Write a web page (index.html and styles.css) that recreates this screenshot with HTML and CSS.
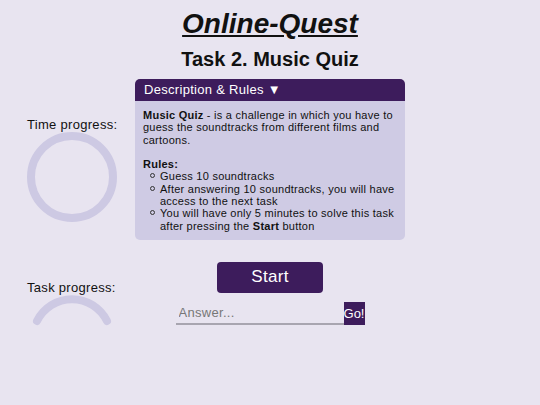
FILE: index.html
```html
<!DOCTYPE html>
<html lang="en">
<head>
    <meta charset="UTF-8">
    <meta name="viewport" content="width=device-width, initial-scale=1.0">
    <title>Online-Quest</title>
    <link rel="stylesheet" href="styles.css">
</head>
<body>
    <h1 class="title">Online-Quest</h1>
    <h2 class="subtitle">Task 2. Music Quiz</h2>

    <div class="layout">
        <div class="progress">
            <div class="progress-label">Time progress:</div>
            <svg class="ring" width="90" height="90" viewBox="0 0 90 90">
                <circle cx="45" cy="45" r="41" fill="none" stroke="#cdc9e3" stroke-width="8"/>
            </svg>
            <div class="progress-label task-label">Task progress:</div>
            <svg class="arc" width="90" height="40" viewBox="0 0 90 40">
                <path d="M10 30 A39 39 0 0 1 80 30" fill="none" stroke="#cdc9e3" stroke-width="8" stroke-linecap="round"/>
            </svg>
        </div>

        <div class="main">
            <div class="rules">
                <div class="rules-header">Description &amp; Rules ▼</div>
                <div class="rules-body">
                    <p><b>Music Quiz</b> - is a challenge in which you have to guess the soundtracks from different films and cartoons.</p>
                    <p class="rules-title"><b>Rules:</b></p>
                    <ul>
                        <li>Guess 10 soundtracks</li>
                        <li>After answering 10 soundtracks, you will have access to the next task</li>
                        <li>You will have only 5 minutes to solve this task after pressing the <b>Start</b> button</li>
                    </ul>
                </div>
            </div>

            <button class="start">Start</button>

            <div class="answer">
                <input class="answer-input" type="text" placeholder="Answer...">
                <button class="go">Go!</button>
            </div>
        </div>
    </div>
</body>
</html>
```

FILE: styles.css
```css
body {
    margin: 0;
    background-color: #e8e4f0;
    font-family: "Liberation Sans", Arial, sans-serif;
    color: #111;
}

.title {
    margin: 8px 0 0;
    font-size: 28px;
    line-height: 32px;
    font-style: italic;
    font-weight: bold;
    text-decoration: underline;
    text-align: center;
}

.subtitle {
    margin: 7px 0 0;
    font-size: 20px;
    line-height: 24px;
    text-align: center;
}

.layout {
    display: grid;
    grid-template-columns: 135px 270px 135px;
    margin-top: 8px;
}

.progress {
    padding: 38px 0 0 27px;
    display: flex;
    flex-direction: column;
    align-items: flex-start;
}

.progress-label {
    font-size: 13px;
    line-height: 15px;
    letter-spacing: 0.3px;
}

.ring {
    display: block;
}

.task-label {
    margin-top: 58px;
}

.arc {
    display: block;
    margin-top: -4px;
}

.main {
    display: flex;
    flex-direction: column;
    align-items: center;
}

.rules {
    width: 270px;
}

.rules-header {
    background: #3d1c5c;
    color: #fff;
    height: 22px;
    line-height: 22px;
    padding: 0 9px;
    font-size: 13px;
    letter-spacing: 0.3px;
    border-radius: 5px 5px 0 0;
}

.rules-body {
    background: #cfcbe4;
    padding: 8px;
    font-size: 11px;
    line-height: 12.3px;
    letter-spacing: 0.25px;
    border-radius: 0 0 5px 5px;
}

.rules-body p {
    margin: 0;
}

.rules-body .rules-title {
    margin-top: 12.3px;
}

.rules-body ul {
    margin: 0;
    padding-left: 17px;
    list-style: none;
}

.rules-body li::before {
    content: "";
    display: inline-block;
    width: 3px;
    height: 3px;
    border: 1px solid #333;
    border-radius: 50%;
    margin-left: -10px;
    margin-right: 5px;
    vertical-align: 2px;
}

.start {
    margin-top: 22px;
    width: 106px;
    height: 31px;
    background: #3d1c5c;
    color: #fff;
    border: none;
    border-radius: 4px;
    font-family: "Liberation Sans", Arial, sans-serif;
    font-size: 17px;
    letter-spacing: 0.3px;
}

.answer {
    display: flex;
    margin-top: 9px;
}

.answer-input {
    width: 168px;
    height: 23px;
    box-sizing: border-box;
    padding: 0 3px;
    border: none;
    border-bottom: 2px solid #a8a5b0;
    background: transparent;
    font-family: "Liberation Sans", Arial, sans-serif;
    font-size: 13px;
    letter-spacing: 0.3px;
    outline: none;
}

.answer-input::placeholder {
    color: #777;
}

.go {
    width: 21px;
    height: 23px;
    padding: 0;
    border: none;
    background: #3d1c5c;
    color: #fff;
    font-family: "Liberation Sans", Arial, sans-serif;
    font-size: 13px;
    overflow: hidden;
}
```
